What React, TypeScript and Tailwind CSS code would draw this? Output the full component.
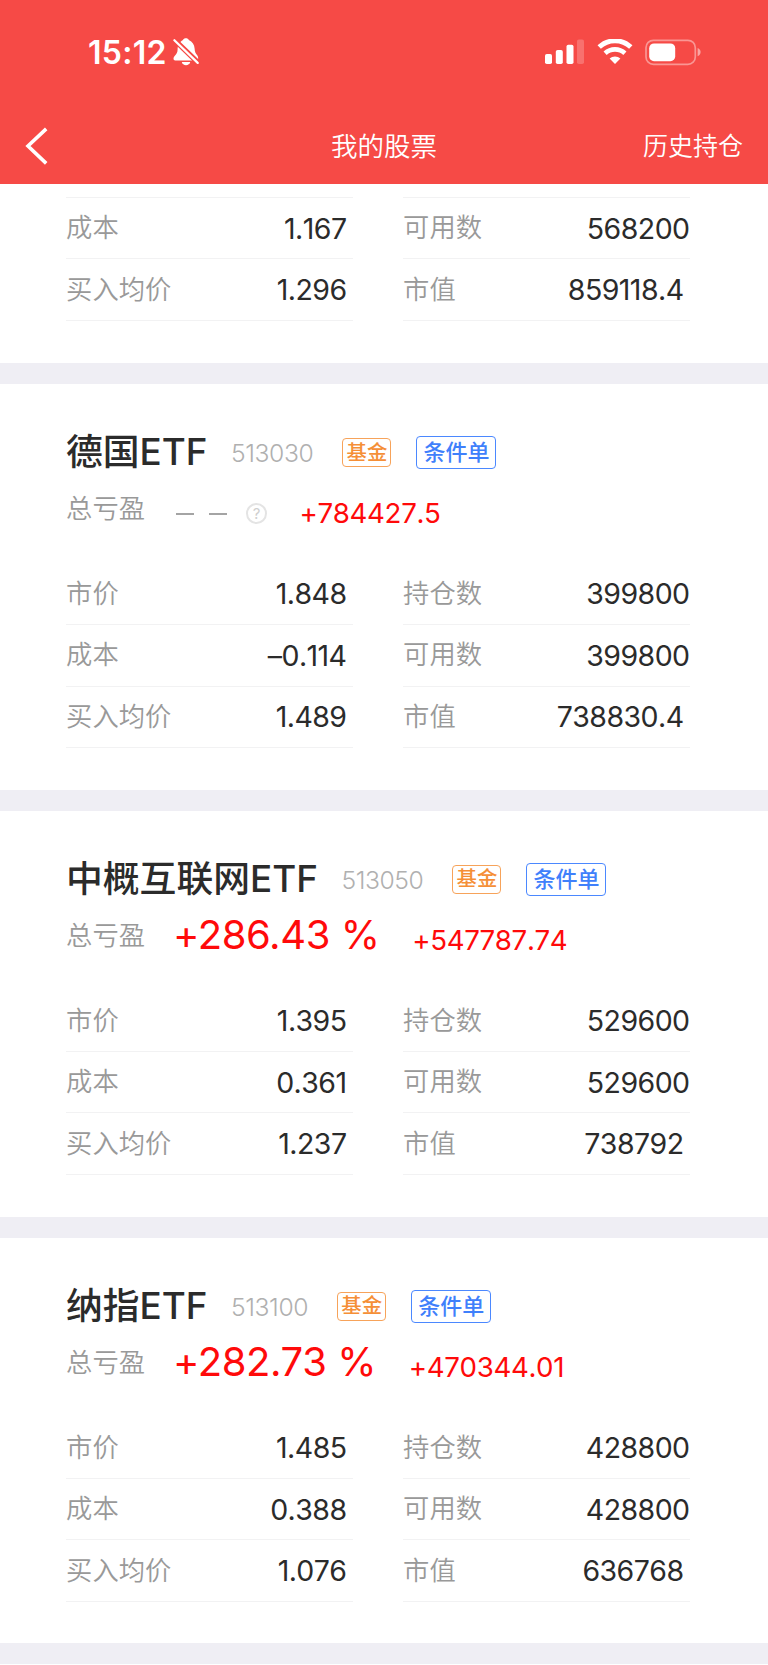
import { clsx } from "clsx";

type Holding = {
    name: string;
    code: string;
    percent?: string;
    amount: string;
    price: string;
    cost: string;
    average: string;
    shares: string;
    available: string;
    value: string;
};

const holdings: Holding[] = [
    {
        name: "德国ETF",
        code: "513030",
        amount: "+784427.5",
        price: "1.848",
        cost: "–0.114",
        average: "1.489",
        shares: "399800",
        available: "399800",
        value: "738830.4",
    },
    {
        name: "中概互联网ETF",
        code: "513050",
        percent: "+286.43 %",
        amount: "+547787.74",
        price: "1.395",
        cost: "0.361",
        average: "1.237",
        shares: "529600",
        available: "529600",
        value: "738792",
    },
    {
        name: "纳指ETF",
        code: "513100",
        percent: "+282.73 %",
        amount: "+470344.01",
        price: "1.485",
        cost: "0.388",
        average: "1.076",
        shares: "428800",
        available: "428800",
        value: "636768",
    },
];

const StatusBar = () => {
    return (
        <div className="flex h-[104px] items-center pl-[88px] pr-[67px]">
            <span className="w-[85px] pt-[2px] text-[32px] leading-none font-semibold tracking-[0.3px]">15:12</span>
            <svg width="26" height="28" viewBox="0 0 26 28" fill="currentColor">
                <path d="M7.4 4C8.4 3 9.2 2.4 10 2C10.6 -.2 15.2 -.2 15.8 2C19.4 3.6 21.4 6.6 21.6 10.6C21.8 14.2 22.6 15.4 24 17C24.9 18.1 25.3 19.2 25.1 21Z" />
                <path d="M4.9 8.4L19.3 22.4H2.2C.2 22.4 .1 19.9 1.4 18.3C3.4 15.9 4.5 14.6 4.6 11.7C4.6 10.4 4.6 9.5 4.9 8.4Z" />
                <path d="M8.8 24H17.2C16.6 28.2 9.4 28.2 8.8 24Z" />
                <path d="M1.4 2.2L24.7 24.9" fill="none" stroke="#f64a46" strokeWidth="4.6" />
                <path d="M1.4 2.2L24.7 24.9" fill="none" stroke="currentColor" strokeWidth="2.2" strokeLinecap="round" />
            </svg>
            <div className="ml-auto flex items-center">
                <svg width="40" height="26" viewBox="0 0 40 26" fill="currentColor">
                    <rect x="1" y="15" width="7" height="10" rx="1.8" />
                    <rect x="11.8" y="11" width="7" height="14" rx="1.8" />
                    <rect x="22.5" y="5.7" width="7" height="19.3" rx="1.8" />
                    <rect x="33" y="0.5" width="7" height="24.5" rx="1.8" opacity="0.22" />
                </svg>
                <svg className="ml-[12.5px]" width="36" height="26" viewBox="0 0 36 26" fill="none">
                    <path d="M2.2 8.1C11-0.4 25-0.4 33.8 8.1" stroke="currentColor" strokeWidth="4.8" />
                    <path d="M8.1 14.3C13.7 9.1 22.3 9.1 27.9 14.3" stroke="currentColor" strokeWidth="4.6" />
                    <path d="M12.6 19.5C15.6 16.7 20.4 16.7 23.4 19.5L18 25Z" fill="currentColor" />
                </svg>
                <svg className="ml-[12.5px]" width="56" height="27" viewBox="0 0 56 27" fill="none">
                    <rect x="1" y="1.3" width="49.3" height="24" rx="7.4" stroke="currentColor" strokeWidth="1.7" opacity="0.42" />
                    <rect x="4.2" y="4.4" width="26" height="17.8" rx="4.8" fill="currentColor" />
                    <path d="M52.6 9C56.6 10.5 56.6 15.7 52.6 17.2Z" fill="currentColor" opacity="0.5" />
                </svg>
            </div>
        </div>
    );
};

const Header = () => {
    return (
        <header className="h-[184px] bg-[#f64a46] text-white">
            <StatusBar />
            <div className="grid h-20 grid-cols-[1fr_auto_1fr] items-center pt-[3px] pr-[25px] pl-[25px]">
                <svg width="24" height="38" viewBox="0 0 24 38" fill="none">
                    <path d="M21.2 1.9L3 19L21.2 36.4" stroke="currentColor" strokeWidth="3.6" />
                </svg>
                <h1 className="text-[26.5px] leading-[40px] font-[350]">我的股票</h1>
                <span className="text-right text-[25px] leading-[40px] font-[350]">历史持仓</span>
            </div>
        </header>
    );
};

const Row = ({ label, value, inset }: { label: string; value: string; inset?: boolean }) => {
    return (
        <div
            className={clsx(
                "flex h-[61.4px] items-center justify-between border-b border-[#f2f2f3] pl-[0.6px]",
                inset && "pr-[6px]",
            )}
        >
            <span className="text-[26.3px] leading-[40px] font-[350] text-[#999]">{label}</span>
            <span className="pt-px text-[28.5px] leading-[40px] font-[380] tracking-[-0.55px] text-[#2b2b2b] [font-kerning:none]">
                {value}
            </span>
        </div>
    );
};

const Divider = () => <div className="h-[21px] bg-[#efeef4]" />;

const Dashes = () => {
    return (
        <div className="ml-[31px] flex items-center pt-[10px]">
            <div className="mr-[15px] h-[2px] w-[18px] bg-[#a4a4a4]" />
            <div className="h-[2px] w-[18px] bg-[#a4a4a4]" />
            <div className="ml-[19px] flex size-[21px] items-center justify-center rounded-full border-2 border-[#e4e4e4] text-[15px] leading-none text-[#cfcfcf]">
                ?
            </div>
        </div>
    );
};

const HoldingCard = ({ holding }: { holding: Holding }) => {
    return (
        <section className="h-[405.9px] pr-[78.5px] pl-[65.5px] pt-[45px]">
            <div className="flex h-12 items-center">
                <h2 className="pb-px pl-[0.5px] text-[36.8px] leading-[48px] font-medium text-[#2b2b2b]">{holding.name}</h2>
                <span className="ml-[23.5px] pt-px text-[24.7px] font-light tracking-[-0.4px] text-[#b0b0b0]">{holding.code}</span>
                <span className="ml-[29px] flex h-[29px] w-[49px] items-center justify-center rounded-[4px] border border-[#f7a35a] text-[20.4px] font-[450] text-[#f58f37]">
                    基金
                </span>
                <span className="ml-[25px] flex h-[33px] w-[80px] items-center justify-center rounded-[4px] border border-[#4b88ff] text-[22px] font-[450] text-[#3f80fb]">
                    条件单
                </span>
            </div>
            <div className="mt-[8px] flex h-12 items-center">
                <span className="pt-px pl-[0.6px] text-[26.3px] leading-[40px] font-[350] text-[#999]">总亏盈</span>
                {holding.percent ? (
                    <span className="-mt-[2px] ml-[28px] text-[40px] leading-[46px] tracking-[-0.4px] text-[#ff0a0a]">
                        {holding.percent}
                    </span>
                ) : (
                    <Dashes />
                )}
                <span className="ml-[32.5px] pt-[9px] text-[27.7px] leading-[40px] font-[380] tracking-[-0.35px] text-[#ff0a0a] [font-kerning:none]">
                    {holding.amount}
                </span>
            </div>
            <div className="mt-[31px] grid grid-cols-[287px_287px] justify-between">
                <div>
                    <Row label="市价" value={holding.price} inset />
                    <Row label="成本" value={holding.cost} inset />
                    <Row label="买入均价" value={holding.average} inset />
                </div>
                <div>
                    <Row label="持仓数" value={holding.shares} />
                    <Row label="可用数" value={holding.available} />
                    <Row label="市值" value={holding.value} inset />
                </div>
            </div>
        </section>
    );
};

export default function App() {
    return (
        <main className="h-[1665px] w-[768px] overflow-hidden bg-white font-['Inter','Noto_Sans_CJK_SC',sans-serif]">
            <Header />
            <section className="h-[178.8px] pt-[13px] pr-[78.5px] pl-[65.5px]">
                <div className="grid grid-cols-[287px_287px] justify-between">
                    <div className="border-t border-[#f2f2f3]">
                        <Row label="成本" value="1.167" inset />
                        <Row label="买入均价" value="1.296" inset />
                    </div>
                    <div className="border-t border-[#f2f2f3]">
                        <Row label="可用数" value="568200" />
                        <Row label="市值" value="859118.4" inset />
                    </div>
                </div>
            </section>
            <Divider />
            {holdings.map((holding) => (
                <div key={holding.code}>
                    <HoldingCard holding={holding} />
                    <Divider />
                </div>
            ))}
        </main>
    );
}
